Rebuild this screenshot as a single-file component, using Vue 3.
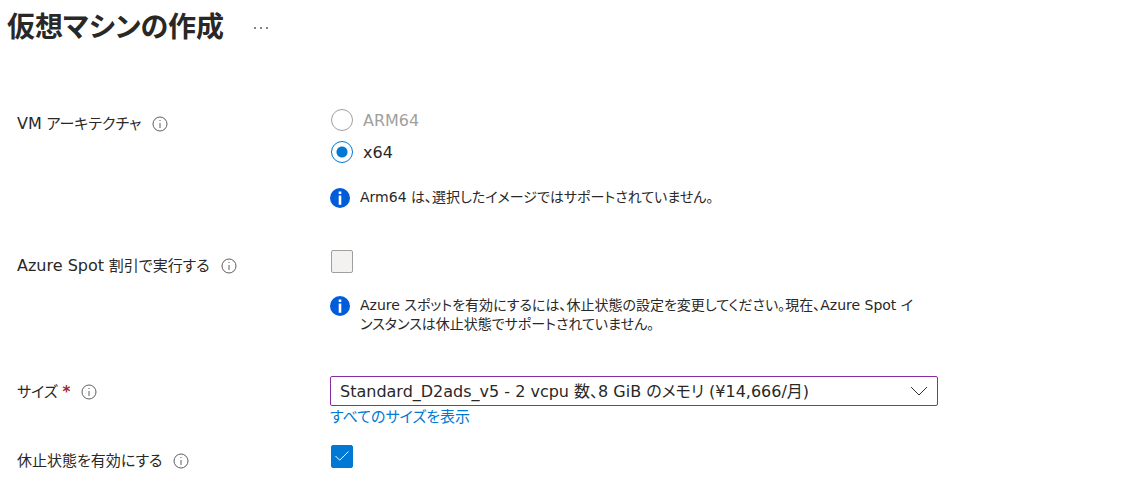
<script setup>
import { ref } from 'vue'

const arch = ref('x64')
const spot = ref(false)
const hibernate = ref(true)
const size = ref('d2ads')
</script>

<template>
  <main class="page">
    <header class="header">
      <h1>仮想マシンの作成</h1>
      <button class="more" type="button" aria-label="その他">
        <svg width="16" height="4" viewBox="0 0 16 4" aria-hidden="true">
          <path d="M1.2 1.2h1.6v1.6H1.2zM7.2 1.2h1.6v1.6H7.2zM13.2 1.2h1.6v1.6h-1.6z" />
        </svg>
      </button>
    </header>

    <form class="form" @submit.prevent>
      <div class="row arch" role="radiogroup" aria-labelledby="arch-label">
        <div class="label">
          <span id="arch-label"><span class="latin">VM</span> アーキテクチャ</span>
          <svg class="hint" viewBox="0 0 16 16" aria-hidden="true">
            <circle cx="8" cy="8" r="7" /><path d="M8 7v5M8 4v1" />
          </svg>
        </div>
        <div class="field">
          <label class="choice disabled">
            <input v-model="arch" type="radio" name="arch" value="arm64" disabled />
            <span>ARM64</span>
          </label>
          <label class="choice">
            <input v-model="arch" type="radio" name="arch" value="x64" />
            <span>x64</span>
          </label>
          <div class="note">
            <svg class="info" viewBox="0 0 20 20" aria-hidden="true">
              <circle cx="10" cy="10" r="10" />
              <path d="M8.7 3.5h2.6v2.6H8.7zM8.7 7.6h2.6v9.2H8.7z" />
            </svg>
            <p>Arm64 は、選択したイメージではサポートされていません。</p>
          </div>
        </div>
      </div>

      <div class="row spot">
        <div class="label">
          <label for="spot"><span class="latin">Azure Spot</span> 割引で実行する</label>
          <svg class="hint" viewBox="0 0 16 16" aria-hidden="true">
            <circle cx="8" cy="8" r="7" /><path d="M8 7v5M8 4v1" />
          </svg>
        </div>
        <div class="field">
          <span class="box">
            <input id="spot" v-model="spot" type="checkbox" disabled />
          </span>
          <div class="note">
            <svg class="info" viewBox="0 0 20 20" aria-hidden="true">
              <circle cx="10" cy="10" r="10" />
              <path d="M8.7 3.5h2.6v2.6H8.7zM8.7 7.6h2.6v9.2H8.7z" />
            </svg>
            <p>Azure スポットを有効にするには、休止状態の設定を変更してください。現在、Azure Spot インスタンスは休止状態でサポートされていません。</p>
          </div>
        </div>
      </div>

      <div class="row size">
        <div class="label">
          <label for="size">サイズ <span class="required">*</span></label>
          <svg class="hint" viewBox="0 0 16 16" aria-hidden="true">
            <circle cx="8" cy="8" r="7" /><path d="M8 7v5M8 4v1" />
          </svg>
        </div>
        <div class="field">
          <div class="select">
            <select id="size" v-model="size">
              <option value="d2ads">Standard_D2ads_v5 - 2 vcpu 数、8 GiB のメモリ (¥14,666/月)</option>
            </select>
            <svg class="chevron" viewBox="0 0 18 10" aria-hidden="true"><path d="M1 1l8 8 8-8" /></svg>
          </div>
          <a class="link" href="#">すべてのサイズを表示</a>
        </div>
      </div>

      <div class="row hibernate">
        <div class="label">
          <label for="hibernate">休止状態を有効にする</label>
          <svg class="hint" viewBox="0 0 16 16" aria-hidden="true">
            <circle cx="8" cy="8" r="7" /><path d="M8 7v5M8 4v1" />
          </svg>
        </div>
        <div class="field">
          <span class="box">
            <input id="hibernate" v-model="hibernate" type="checkbox" />
            <svg v-if="hibernate" class="tick" viewBox="0 0 16 12" aria-hidden="true"><path d="M1.5 6l4.2 4.2L14.5 1.5" /></svg>
          </span>
        </div>
      </div>
    </form>
  </main>
</template>

<style>
body {
  background: #fff;
}
</style>

<style scoped>
.page {
  box-sizing: border-box;
  padding: 4px 16px 16px 7px;
  color: #292827;
  font-family: "DejaVu Sans", "Noto Sans CJK JP", sans-serif;
  font-size: 15px;
  line-height: 20px;
  font-feature-settings: "palt";
}
.header {
  display: flex;
  align-items: center;
  gap: 29px;
}
h1 {
  margin: 0;
  font-family: "Noto Sans CJK JP", sans-serif;
  font-size: 28px;
  font-weight: 700;
  line-height: 42px;
}
.more {
  display: flex;
  padding: 5px 0 0;
  border: 0;
  background: none;
}
.more svg {
  fill: #323130;
}
.form {
  padding: 62px 0 0 10px;
}
.row {
  display: grid;
  grid-template-columns: 313px minmax(0, 608px);
}
.label {
  display: flex;
  align-items: center;
  gap: 11px;
  height: 32px;
}
.latin,
.choice {
  font-size: 16px;
}
.hint {
  width: 16px;
  height: 16px;
  fill: none;
  stroke: #605e5c;
}
.required {
  color: #a4262c;
  font-weight: 700;
}
.choice {
  display: flex;
  align-items: center;
  gap: 10px;
  height: 24px;
  margin-bottom: 8px;
}
.choice span {
  padding-top: 2px;
}
.choice.disabled {
  color: #a19f9d;
}
input {
  appearance: none;
  box-sizing: border-box;
  display: block;
  width: 22px;
  height: 22px;
  margin: 0 0 0 1px;
  border: 1px solid #8a8886;
  background: #fff;
}
input[type="radio"] {
  border-radius: 50%;
}
input[type="radio"]:disabled {
  border-color: #a19f9d;
}
input[type="radio"]:checked {
  border-color: #0078d4;
  background: radial-gradient(circle, #0078d4 5px, #fff 6px);
}
input[type="checkbox"] {
  height: 23px;
  border-radius: 2px;
}
input[type="checkbox"]:disabled {
  border-color: #a19f9d;
  background: #f3f2f1;
}
input[type="checkbox"]:checked {
  border-color: #0078d4;
  background: #0078d4;
}
.box {
  position: relative;
  display: block;
  width: 23px;
}
.tick {
  position: absolute;
  top: 5px;
  left: 4px;
  width: 16px;
  height: 12px;
  fill: none;
  stroke: #fff;
  pointer-events: none;
}
.note {
  display: flex;
  gap: 10px;
  font-size: 14px;
  line-height: 19px;
}
.note p {
  flex: 1;
  margin: 0;
  padding-right: 20px;
}
.info {
  flex: none;
  width: 20px;
  height: 20px;
  fill: #015cda;
}
.info path {
  fill: #fff;
}
.arch .note {
  margin-top: 24px;
}
.spot {
  margin-top: 42px;
}
.spot .note {
  margin-top: 23px;
}
.size {
  margin-top: 42px;
}
.select {
  position: relative;
}
select {
  appearance: none;
  box-sizing: border-box;
  display: block;
  width: 100%;
  height: 30px;
  padding: 1px 40px 0 9px;
  border: 1px solid #8a2da5;
  border-radius: 2px;
  background: #fff;
  color: inherit;
  font: inherit;
  font-size: 16px;
  font-feature-settings: inherit;
}
.chevron {
  position: absolute;
  top: 10px;
  right: 10px;
  width: 18px;
  height: 10px;
  fill: none;
  stroke: #323130;
  pointer-events: none;
}
.link {
  display: block;
  width: fit-content;
  line-height: 22px;
  color: #0078d4;
  text-decoration: none;
}
.hibernate {
  margin-top: 17px;
}
</style>
